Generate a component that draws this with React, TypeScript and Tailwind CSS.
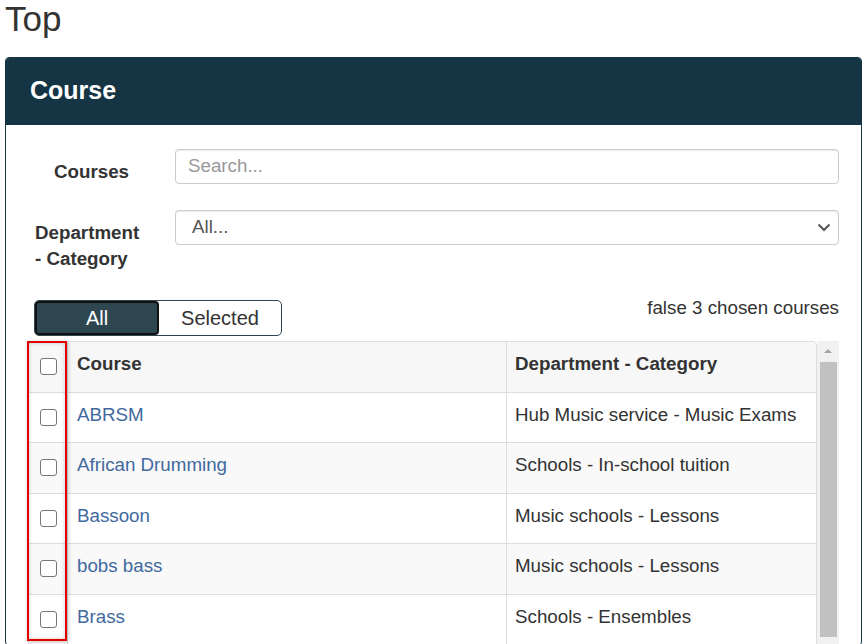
const courses = [
  { name: "ABRSM", dept: "Hub Music service - Music Exams" },
  { name: "African Drumming", dept: "Schools - In-school tuition" },
  { name: "Bassoon", dept: "Music schools - Lessons" },
  { name: "bobs bass", dept: "Music schools - Lessons" },
  { name: "Brass", dept: "Schools - Ensembles" },
];

function Checkbox() {
  return (
    <span className="block h-[17px] w-[17px] rounded-[3px] border-[1.5px] border-[#767676] bg-white" />
  );
}

function Chevron() {
  return (
    <svg width="14" height="9" viewBox="0 0 14 9" fill="none">
      <path d="M1.5 1.5 7 7l5.5-5.5" stroke="#555" strokeWidth="2" />
    </svg>
  );
}

export default function App() {
  return (
    <div className="h-[644px] overflow-hidden bg-white pl-[5px] pr-[2px] font-['Liberation_Sans',Arial,sans-serif] text-[#333]">
      <h1 className="text-[35px] font-normal leading-[1.1]">Top</h1>

      <section className="mt-[18px] rounded-[4px] border border-[#153545]">
        <div className="flex h-[67px] items-center rounded-t-[3px] bg-[#153545] px-[24px]">
          <h2 className="text-[25px] font-bold text-white">Course</h2>
        </div>

        <div className="px-[22px] pt-[24px]">
          {/* search filters */}
          <div className="flex">
            <label className="w-[147px] shrink-0 pl-[26px] pt-[9px] text-[18.75px] font-bold leading-[27px]">
              Courses
            </label>
            <div className="flex h-[35px] flex-1 items-center rounded-[4px] border border-[#ccc] pl-[12px] text-[18.75px] text-[#999] shadow-[inset_0_1px_1px_rgba(0,0,0,0.075)]">
              Search...
            </div>
          </div>

          <div className="mt-[25px] flex">
            <label className="w-[147px] shrink-0 pl-[7px] pt-[10px] text-[18.75px] font-bold leading-[26px]">
              <span className="block w-[110px]">Department - Category</span>
            </label>
            <div className="flex h-[35px] flex-1 items-center justify-between rounded-[4px] border border-[#ccc] pl-[16px] pr-[7px] text-[18.75px] text-[#555] shadow-[inset_0_1px_1px_rgba(0,0,0,0.075)]">
              <span>All...</span>
              <Chevron />
            </div>
          </div>

          {/* all / selected toggle */}
          <div className="mt-[28px] flex items-start justify-between">
            <div className="ml-[6px] flex h-[36px] w-[248px] rounded-[5px] border border-[#2e4650] text-[20px]">
              <button className="w-[124px] rounded-[4px] border-2 border-[#111] bg-[#2e4650] leading-none text-white">
                All
              </button>
              <button className="flex-1 leading-none text-[#333]">Selected</button>
            </div>
            <p className="-mt-[6px] text-[18.75px] leading-[27px]">false 3 chosen courses</p>
          </div>

          {/* course table with scrollbar */}
          <div className="relative mt-[5px] flex">
            <div className="flex-1 overflow-hidden rounded-tr-[5px] border-l border-r border-t border-[#ddd] text-[18.75px] leading-[27px]">
              <div className="grid h-[51px] grid-cols-[39px_439px_1fr] border-b border-[#ddd] bg-[#f7f7f7] font-bold">
                <div className="flex justify-center border-r border-[#ddd] pt-[16px]">
                  <Checkbox />
                </div>
                <div className="border-r border-[#ddd] pl-[9px] pt-[8px]">Course</div>
                <div className="pl-[8px] pt-[8px]">Department - Category</div>
              </div>
              {courses.map((c, i) => (
                <div
                  key={c.name}
                  className={
                    "grid h-[50.5px] grid-cols-[39px_439px_1fr] border-b border-[#ddd] " +
                    (i % 2 === 1 ? "bg-[#f9f9f9]" : "bg-white")
                  }
                >
                  <div className="flex justify-center border-r border-[#ddd] pt-[16px]">
                    <Checkbox />
                  </div>
                  <div className="border-r border-[#ddd] pl-[9px] pt-[8px] text-[#41699e]">{c.name}</div>
                  <div className="pl-[8px] pt-[8px]">{c.dept}</div>
                </div>
              ))}
            </div>

            <div className="flex w-[22px] shrink-0 flex-col items-center bg-[#f1f1f1]">
              <div className="flex h-[21px] items-center justify-center">
                <span className="block h-0 w-0 border-x-[4px] border-b-[4px] border-x-transparent border-b-[#a3a3a3]" />
              </div>
              <div className="h-[275px] w-[17px] bg-[#c1c1c1]" />
            </div>

            {/* highlighted checkbox column */}
            <div className="absolute left-[-1px] top-0 h-[300px] w-[40px] border-2 border-[#e50000] shadow-[1px_1px_4px_rgba(0,0,0,0.25),inset_0_0_4px_rgba(0,0,0,0.2)]" />
          </div>
        </div>
      </section>
    </div>
  );
}
